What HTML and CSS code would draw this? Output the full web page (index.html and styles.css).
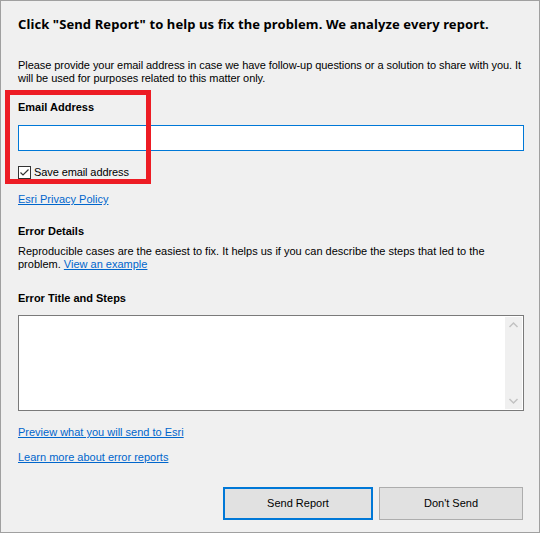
FILE: index.html
```html
<!DOCTYPE html>
<html>
<head>
<meta charset="utf-8">
<link rel="stylesheet" href="styles.css">
</head>
<body>
<div class="dialog">
  <h1 class="title">Click "Send Report" to help us fix the problem. We analyze every report.</h1>
  <p class="para intro">Please provide your email address in case we have follow-up questions or a solution to share with you. It will be used for purposes related to this matter only.</p>
  <div class="label email-label">Email Address</div>
  <div class="input"></div>
  <div class="check-row">
    <svg class="checkbox" width="13" height="13" viewBox="0 0 13 13"><rect x="0.5" y="0.5" width="12" height="12" fill="#ffffff" stroke="#333333"/><polyline points="2.5,6.5 5,9 10.5,3.5" fill="none" stroke="#333333" stroke-width="1.2"/></svg>
    <span class="check-label">Save email address</span>
  </div>
  <a class="link privacy" href="#">Esri Privacy Policy</a>
  <div class="label details-label">Error Details</div>
  <p class="para details">Reproducible cases are the easiest to fix. It helps us if you can describe the steps that led to the problem. <a class="link" href="#">View an example</a></p>
  <div class="label steps-label">Error Title and Steps</div>
  <div class="textarea">
    <div class="textarea-body"></div>
    <div class="scrollbar">
      <svg width="17" height="17" viewBox="0 0 17 17"><polyline points="4.5,10 8.5,6 12.5,10" fill="none" stroke="#c2c2c2" stroke-width="1.5"/></svg>
      <svg width="17" height="17" viewBox="0 0 17 17"><polyline points="4.5,7 8.5,11 12.5,7" fill="none" stroke="#c2c2c2" stroke-width="1.5"/></svg>
    </div>
  </div>
  <a class="link preview" href="#">Preview what you will send to Esri</a>
  <a class="link learn" href="#">Learn more about error reports</a>
  <div class="buttons">
    <div class="btn btn-default">Send Report</div>
    <div class="btn btn-plain">Don't Send</div>
  </div>
  <div class="highlight"></div>
</div>
</body>
</html>
```
FILE: styles.css
```css
html, body {
  margin: 0;
  padding: 0;
  background: #ffffff;
}
.dialog {
  position: relative;
  box-sizing: border-box;
  width: 540px;
  height: 533px;
  border: 1px solid #a0a0a0;
  background: #f0f0f0;
  padding: 15px 16px 0 17px;
  display: flex;
  flex-direction: column;
  align-items: flex-start;
  font-family: "Liberation Sans", Arial, sans-serif;
  font-size: 11px;
  line-height: 13px;
  color: #000000;
}
.title {
  margin: 0;
  font-family: "Noto Sans", sans-serif;
  font-weight: bold;
  font-size: 13px;
  line-height: 17px;
  letter-spacing: 0.1px;
  white-space: nowrap;
}
.para {
  margin: 0;
  width: 506px;
}
.intro {
  margin-top: 26px;
  width: 510px;
  letter-spacing: -0.06px;
}
.label {
  font-weight: bold;
  height: 13px;
}
.email-label { margin-top: 16px; }
.input {
  margin-top: 11px;
  box-sizing: border-box;
  width: 506px;
  height: 26px;
  border: 1px solid #0078d7;
  background: #ffffff;
}
.check-row {
  margin-top: 15px;
  display: flex;
  align-items: center;
  gap: 3px;
  height: 13px;
}
.checkbox { display: block; }
.check-label { letter-spacing: -0.1px; }
.link {
  color: #0066cc;
  text-decoration: underline;
}
.privacy { margin-top: 14px; }
.details-label { margin-top: 19px; }
.details { margin-top: 7px; }
.steps-label { margin-top: 21px; }
.textarea {
  margin-top: 10px;
  box-sizing: border-box;
  width: 506px;
  height: 96px;
  border: 1px solid #7a7a7a;
  background: #ffffff;
  padding: 1px 1px 1px 0;
  display: flex;
}
.textarea-body { flex: 1; }
.scrollbar {
  width: 17px;
  background: #f0f0f0;
  display: flex;
  flex-direction: column;
  justify-content: space-between;
}
.scrollbar svg { display: block; }
.preview { margin-top: 15px; }
.learn { margin-top: 12px; }
.buttons {
  margin-top: 23px;
  align-self: stretch;
  display: flex;
  justify-content: flex-end;
  gap: 6px;
}
.btn {
  box-sizing: border-box;
  height: 33px;
  background: #e1e1e1;
  display: flex;
  align-items: center;
  justify-content: center;
}
.btn-default {
  width: 150px;
  border: 2px solid #0078d7;
}
.btn-plain {
  width: 144px;
  border: 1px solid #adadad;
}
.highlight {
  position: absolute;
  left: 4px;
  top: 89px;
  width: 146px;
  height: 94px;
  box-sizing: border-box;
  border: 5px solid #ed1c24;
}
```
